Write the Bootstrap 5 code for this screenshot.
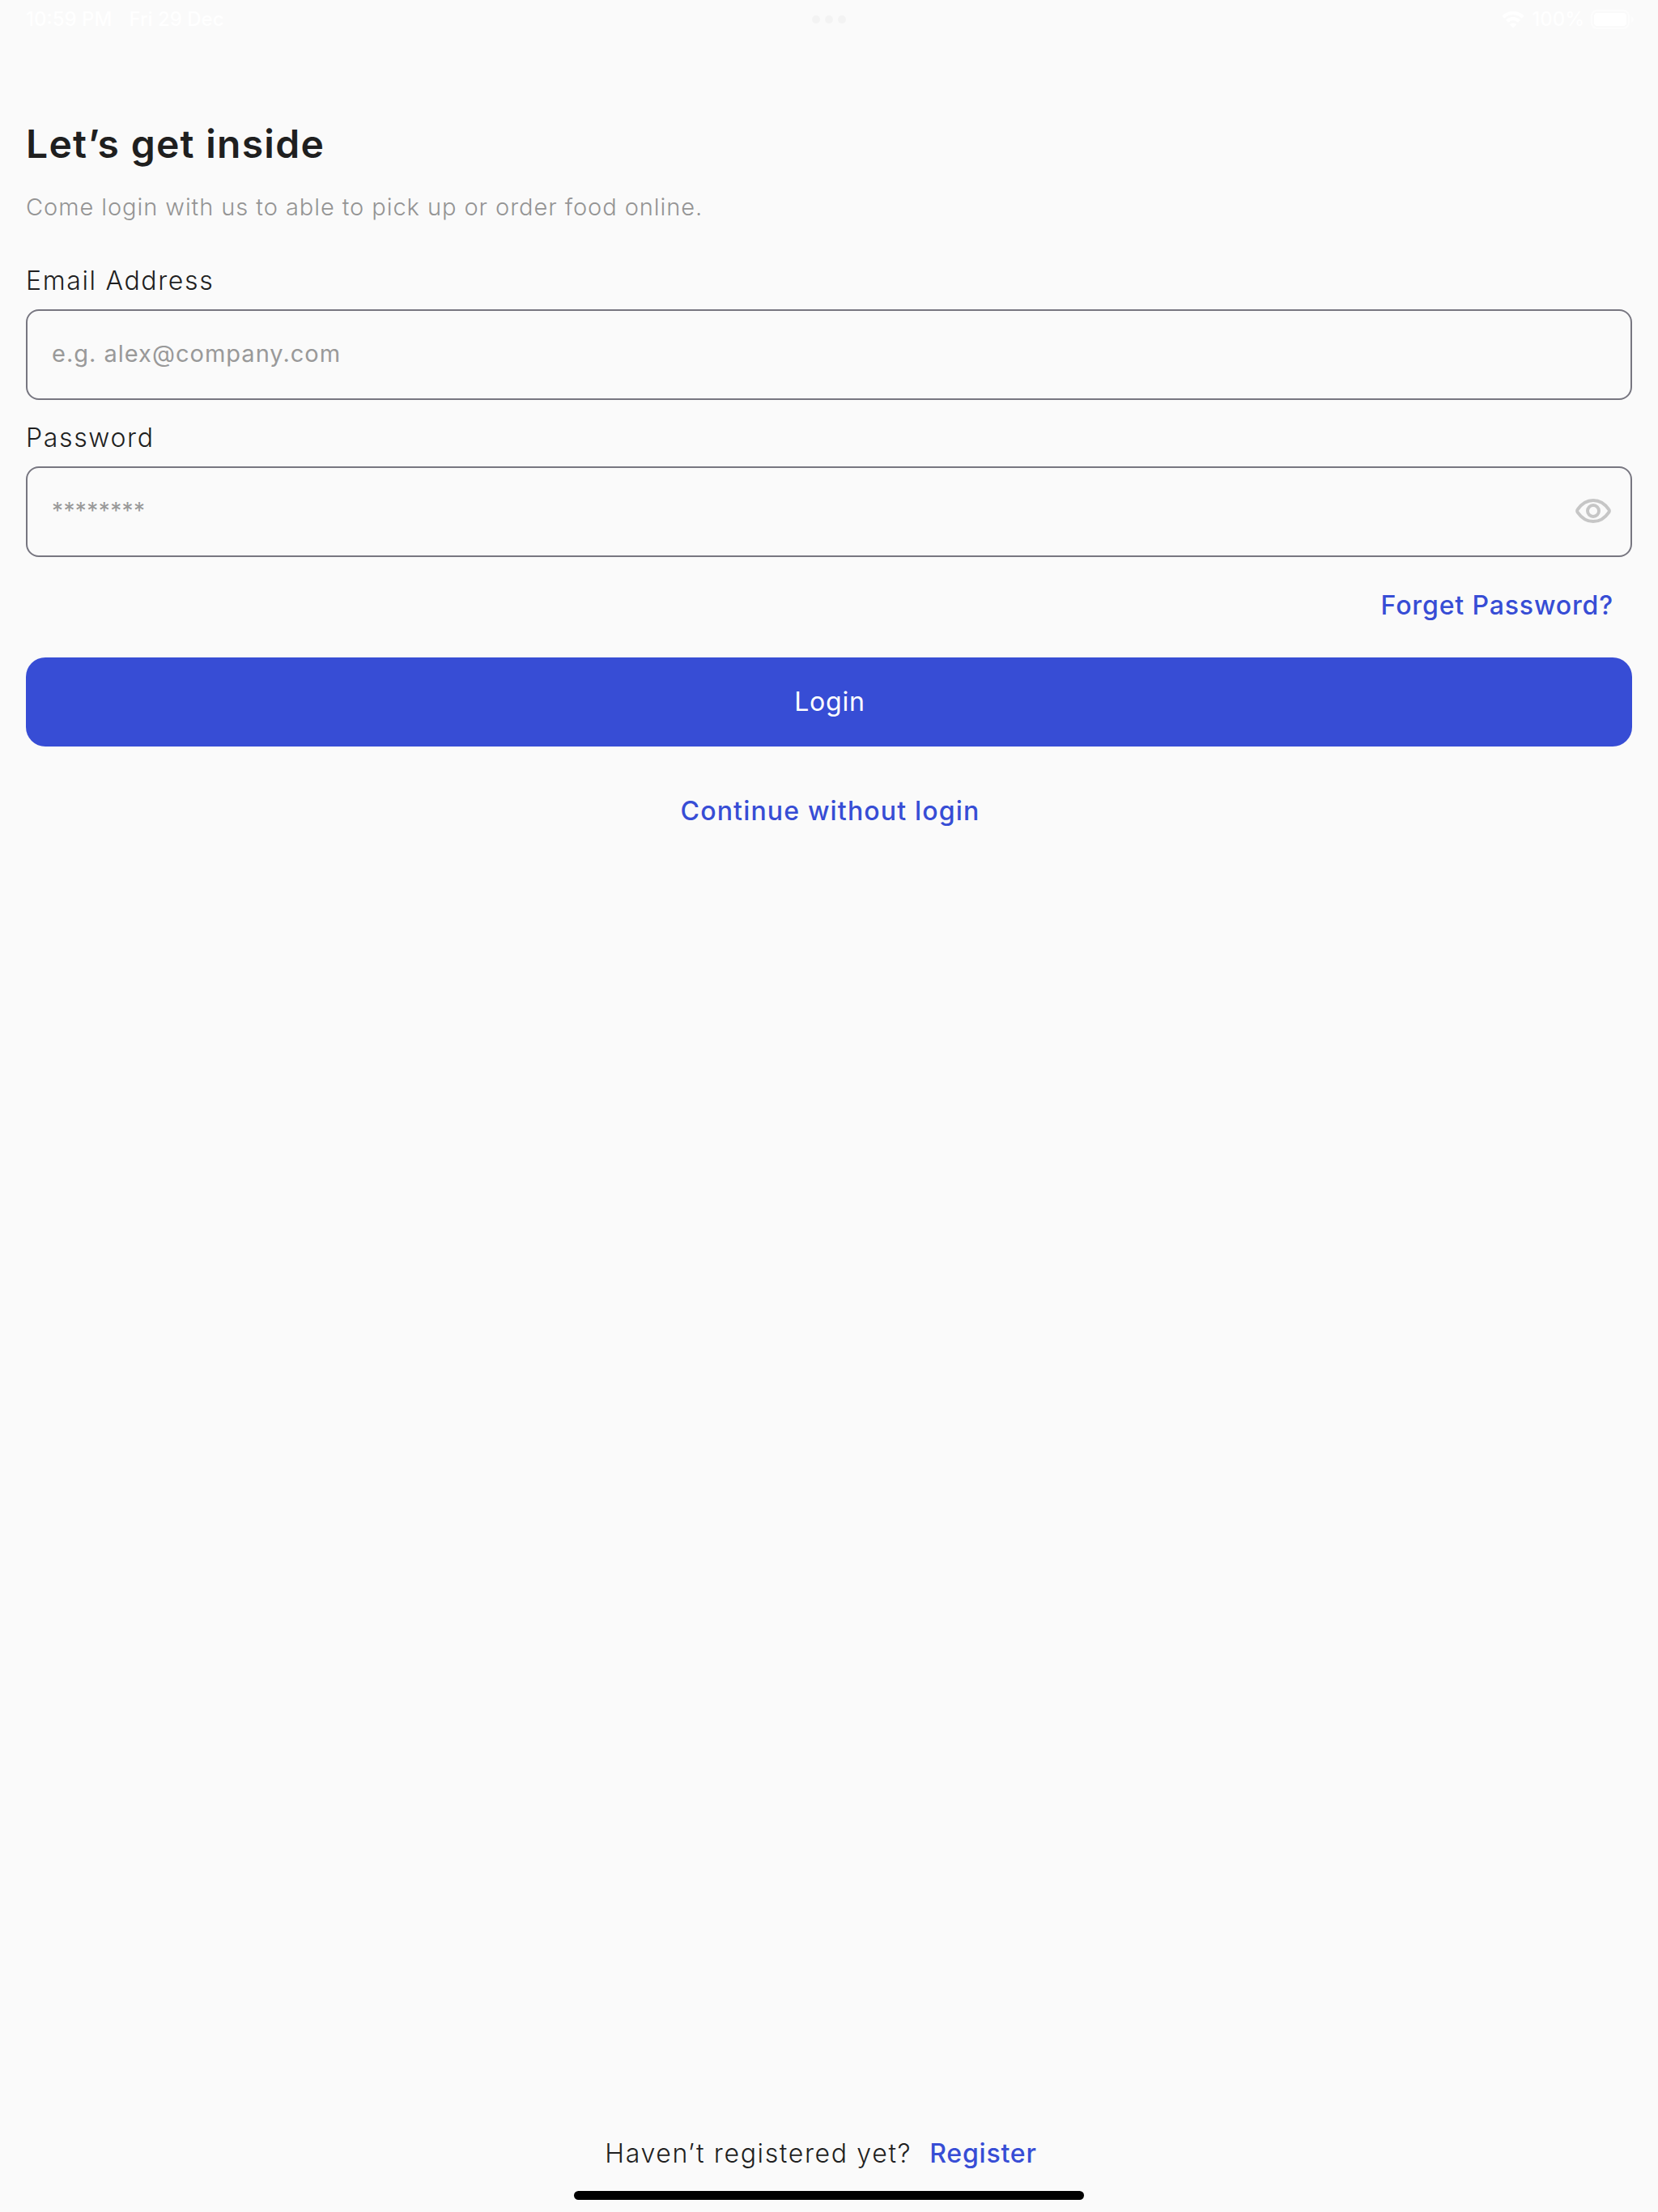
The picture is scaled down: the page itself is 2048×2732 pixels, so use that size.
<!DOCTYPE html>
<html lang="en">
<head>
<meta charset="utf-8">
<meta name="viewport" content="width=device-width, initial-scale=1">
<title>Login</title>
<link href="https://cdn.jsdelivr.net/npm/bootstrap@5.3.0/dist/css/bootstrap.min.css" rel="stylesheet">
<style>
  body { background: #fafafa; color: #1f1f1f; font-family: Inter, "Open Sans", sans-serif; }
  .screen { height: 2732px; padding: 0 32px; }
  .status-bar { height: 48px; color: #fff; font-size: 24px; font-weight: 500; line-height: 46px; }
  .status-side { flex: 1 1 0; }
  .status-date { margin-left: 21px; }
  .status-dots { gap: 6px; }
  .status-dots span { width: 10px; height: 10px; border-radius: 50%; background: #f3f3f3; }
  .status-wifi { width: 28px; height: 21px; margin-right: 9px; }
  .status-battery { width: 54px; height: 24px; margin-left: 8px; margin-right: -3px; }
  .screen-title { margin: 98px 0 0; font-size: 48px; font-weight: 600; line-height: 64px; letter-spacing: 1.28px; }
  .screen-intro { margin: 26px 0 0; color: #949494; font-size: 29px; font-weight: 300; line-height: 40px; letter-spacing: .94px; }
  .field-label { font-size: 32px; font-weight: 300; line-height: 48px; letter-spacing: 1.65px; margin: 0 0 11px; }
  .field-first { margin-top: 47px; }
  .field-next { margin-top: 23px; }
  .field-box { height: 112px; border: 2px solid #777680; border-radius: 16px; padding: 0 24px 2px 30px; }
  .field-box .form-control { color: #1f1f1f; font-size: 29px; letter-spacing: 1px; }
  .field-box .form-control::placeholder { color: #999; opacity: 1; }
  .field-box .field-secret { font-size: 28px; letter-spacing: .4px; }
  .eye-icon { width: 44px; height: 30px; }
  .text-action { color: #374dd5; font-size: 32px; font-weight: 500; line-height: 48px; text-decoration: none; }
  .forgot-link { margin: 36px 23px 40px 0; letter-spacing: .86px; }
  .login-btn { --bs-btn-color: #fff; --bs-btn-bg: #374dd5; --bs-btn-hover-bg: #2f43bd; --bs-btn-hover-color: #fff; height: 110px; border: 0; border-radius: 24px; font-size: 32px; font-weight: 400; letter-spacing: .8px; padding: 0 0 0 2px; }
  .guest-link { margin-top: 56px; padding-left: 3px; letter-spacing: 1.17px; }
  .signup { padding-right: 20px; margin-bottom: 22px; gap: 22px; font-size: 32px; font-weight: 300; line-height: 48px; letter-spacing: 1.65px; }
  .signup-link { letter-spacing: .8px; }
  .home-bar { width: 630px; height: 11px; border-radius: 6px; background: #000; margin-bottom: 15px; }
</style>
<script src="https://cdn.jsdelivr.net/npm/bootstrap@5.3.0/dist/js/bootstrap.bundle.min.js"></script>
</head>
<body>
<div class="screen d-flex flex-column">
  <header class="status-bar d-flex align-items-center">
    <div class="status-side d-flex"><span>10:59 PM</span><span class="status-date">Fri 29 Dec</span></div>
    <div class="status-dots d-flex"><span></span><span></span><span></span></div>
    <div class="status-side d-flex justify-content-end align-items-center">
      <svg class="status-wifi" viewBox="0 0 28 21" fill="none" stroke="#fff" stroke-width="4.2" aria-hidden="true">
        <path d="M1.7 7.2a17.5 17.5 0 0 1 24.6 0M6.6 12.2a10.6 10.6 0 0 1 14.8 0"/>
        <path d="M9.7 16.2a6.2 6.2 0 0 1 8.6 0L14 20.6z" fill="#fff" stroke="none"/>
      </svg>
      <span>100%</span>
      <svg class="status-battery" viewBox="0 0 54 24" aria-hidden="true">
        <rect x="1" y="1" width="46" height="22" rx="7" fill="none" stroke="#fdfdfd" stroke-width="2"/>
        <rect x="4" y="4" width="40" height="16" rx="4" fill="#fff"/>
        <path d="M50 8q3 1.300 3 4t-3 4z" fill="#fdfdfd"/>
      </svg>
    </div>
  </header>

  <main class="d-flex flex-column flex-grow-1">
    <h1 class="screen-title">Let’s get inside</h1>
    <p class="screen-intro">Come login with us to able to pick up or order food online.</p>

    <label class="field-label field-first" for="email">Email Address</label>
    <div class="field-box d-flex align-items-center">
      <input id="email" type="email" class="form-control border-0 bg-transparent shadow-none p-0" placeholder="e.g. alex@company.com">
    </div>

    <label class="field-label field-next" for="password">Password</label>
    <div class="field-box d-flex align-items-center">
      <input id="password" type="password" class="form-control field-secret border-0 bg-transparent shadow-none p-0" placeholder="********">
      <svg class="eye-icon flex-shrink-0" viewBox="0 0 44 30" fill="none" stroke="#c6c6c6" stroke-width="4" stroke-linejoin="round" aria-hidden="true">
        <path d="M2.800 13.200Q10.500 2 22 2T41.200 13.200Q42.500 15 41.200 16.800Q33.500 28 22 28T2.800 16.800Q1.500 15 2.800 13.200z"/>
        <circle cx="22" cy="15" r="7"/>
      </svg>
    </div>

    <a class="text-action forgot-link align-self-end" href="#">Forget Password?</a>
    <button class="btn login-btn w-100" type="button">Login</button>
    <a class="text-action guest-link align-self-center" href="#">Continue without login</a>
  </main>

  <footer class="d-flex flex-column align-items-center">
    <div class="signup d-flex"><span>Haven’t registered yet?</span><a class="text-action signup-link" href="#">Register</a></div>
    <div class="home-bar"></div>
  </footer>
</div>
</body>
</html>
